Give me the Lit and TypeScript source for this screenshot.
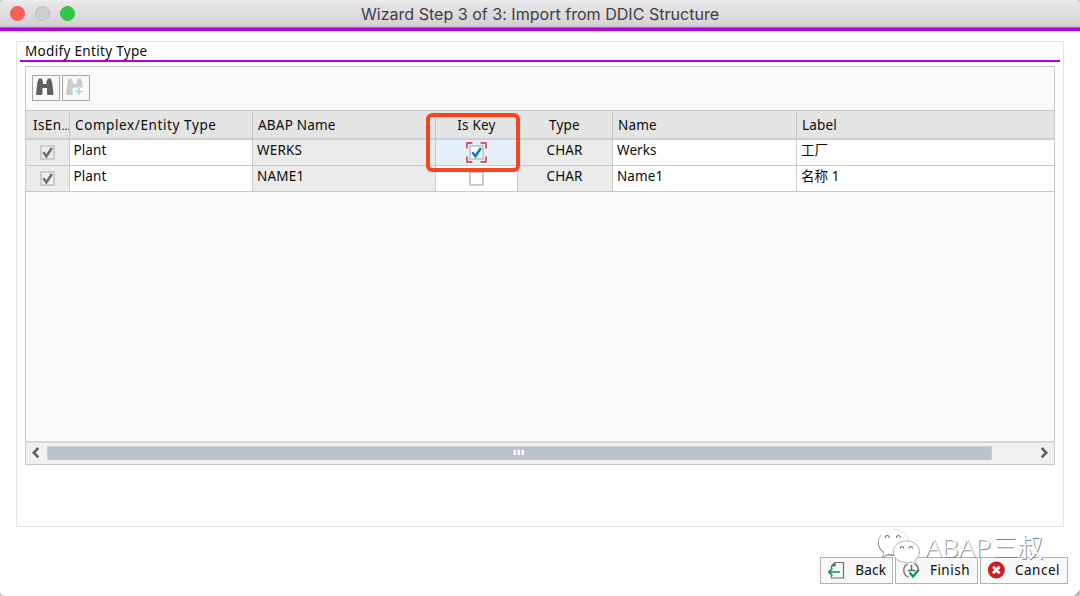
import { LitElement, html, css, svg, nothing } from "lit";
import { customElement, property } from "lit/decorators.js";

const COLUMNS = [
  { id: "isen", label: "IsEn" },
  { id: "entity", label: "Complex/Entity Type" },
  { id: "abap", label: "ABAP Name" },
  { id: "key", label: "Is Key" },
  { id: "type", label: "Type" },
  { id: "name", label: "Name" },
  { id: "label", label: "Label" },
];

const ROWS = [
  { entity: "Plant", abap: "WERKS", key: true, type: "CHAR", name: "Werks", label: "工厂" },
  { entity: "Plant", abap: "NAME1", key: false, type: "CHAR", name: "Name1", label: "名称 1" },
];

@customElement("check-mark")
class CheckMark extends LitElement {
  @property({ type: Boolean }) checked = false;
  @property({ type: Boolean }) disabled = false;
  @property({ type: Boolean }) focused = false;
  static styles = css`
    :host { display: block; width: 21px; height: 21px; }
    svg { display: block; }
  `;
  render() {
    return html`<svg width="21" height="21" viewBox="0 0 21 21" fill="none">
      <rect x="4" y="4" width="13" height="13" fill=${this.disabled ? "#ededed" : "#fff"} stroke="#cbcbcb" stroke-width="2" />
      ${this.checked
        ? svg`<path d="M6.3 10.3 L9.4 14.2 L14.9 6" stroke=${this.disabled ? "#707070" : "#0a80c4"} stroke-width="2.6" />`
        : nothing}
      ${this.focused
        ? svg`<path d="M1 6.5V1H6.5M14.5 1H20V6.5M20 14.5V20H14.5M6.5 20H1V14.5" stroke="#e0222c" stroke-width="1.4" />`
        : nothing}
    </svg>`;
  }
}

@customElement("app-root")
class AppRoot extends LitElement {
  static styles = css`
    :host { display: block; width: 1080px; height: 596px; background: #c6c6c6; overflow: hidden; }
    * { box-sizing: border-box; }
    .window {
      position: relative; height: 596px; background: #fff; border-radius: 5px; overflow: hidden;
      display: flex; flex-direction: column;
      font: 13.5px/20px "Noto Sans", "Noto Sans CJK SC", sans-serif; color: #0c0c0c; white-space: nowrap;
    }
    .title {
      height: 31px; flex: none; display: grid; grid-template-columns: 76px 1fr 76px; align-items: start;
      background: linear-gradient(#f0eff0 0, #e7e5e7 3px, #d3d1d3 26px, #b9b4ba 27px, #b100dd 28px);
      border-bottom: 3px solid #b100dd;
      font: 16.1px/28px Inter, Roboto, sans-serif; color: #404040;
    }
    .lights { display: flex; gap: 10px; padding: 6px 0 0 10px; }
    .lights i { width: 15px; height: 15px; border-radius: 50%; flex: none; }
    .red { background: #fc605b; border: 1px solid #ee5852; }
    .grey { background: #d0cfd0; border: 1px solid #bdbcbd; }
    .green { background: #34c84a; border: 1px solid #2dbb41; }
    .title span { text-align: center; letter-spacing: -0.02px; }
    .group {
      margin: 10px 16px 0; height: 486px; flex: none; border: 1px solid #e4e4e4; padding: 0 3px;
      display: flex; flex-direction: column;
    }
    .legend { height: 20px; line-height: 19px; padding-left: 5px; border-bottom: 2px solid #b100dd; }
    .legend b { font-weight: 400; letter-spacing: 0.32px; }
    .panel {
      margin: 4px 5px 0; height: 399px; border: 1px solid #c6c6c6; background: #f9f9f9;
      display: flex; flex-direction: column;
    }
    .tools { height: 43px; flex: none; display: flex; gap: 2px; padding: 8px 0 0 6px; }
    .tool { width: 28px; height: 26px; border: 1px solid #a5a5a5; background: #f9f9f9; }
    .tool svg { display: block; }
    .row { display: grid; grid-template-columns: 44px 183px 183px 82px 95px 184px 257px; height: 26px; flex: none; }
    .head { height: 30px; }
    .cell { border-right: 1px solid #c9c9c9; border-bottom: 1px solid #c9c9c9; padding: 0 0 0 4px; overflow: hidden; background: #fff; letter-spacing: 0.1px; }
    .cell:last-child { border-right: 0; }
    .head .cell {
      background: #e4e4e4; border-top: 1px solid #c9c9c9; border-bottom: 2px solid #cfcfcf;
      line-height: 28px; padding-left: 5px; letter-spacing: 0.6px;
    }
    .head .abap, .head .key, .head .type, .head .name, .head .label { letter-spacing: 0.2px; }
    .head .isen { padding-left: 7px; letter-spacing: 0.4px; }
    .isen small { font-size: 11px; letter-spacing: 0; }
    .row .cell.key { text-align: center; padding-left: 0; }
    .row .cell.type { text-align: center; padding: 0 1px 0 0; }
    .body .isen, .body .abap, .body .type { background: #ebebeb; }
    .body .entity { padding-left: 3.5px; }
    .body .abap { letter-spacing: 0.2px; }
    .body .isen { padding-left: 3.5px; }
    .body .isen check-mark { margin: 2px 0 0 7px; }
    .body .key check-mark { margin: 2px 0 0 30px; }
    .body .selected { background: #e5f1fa; }
    .space { flex: 1; }
    .scroll {
      height: 23px; flex: none; border-top: 2px solid #d5d5d5; background: #f1f1f1;
      display: grid; grid-template-columns: 21px 945px 1fr 21px; align-items: start;
    }
    .thumb { margin-top: 3px; height: 14px; background: #b8c3cd; display: flex; gap: 1px; justify-content: center; padding: 3px 2px 0 0; border: 1px solid #c6d0d8; border-width: 1px 1px 0 1px; }
    .thumb i { width: 3px; height: 5px; background: #fff; border-left: 1px solid #dfe5ea; }
    .scroll svg { display: block; margin-top: 3px; }
    .footer { display: flex; gap: 2px; justify-content: flex-end; padding: 30px 12px 0 0; }
    .btn {
      height: 27px; border: 1px solid #b2b2b2; background: #f7f7f7; display: flex; align-items: center;
      justify-content: space-between; padding: 0 6px 1px 6px;
    }
    .back { width: 73px; letter-spacing: 0.15px; }
    .finish { width: 83px; letter-spacing: 0.5px; padding-right: 7px; }
    .cancel { width: 88px; letter-spacing: 0.5px; padding-right: 7px; }
    .callout { position: absolute; left: 426px; top: 113px; width: 94px; height: 59px; border: 4px solid #fb4420; border-radius: 6px; }
    .watermark { position: absolute; left: 874px; top: 524px; pointer-events: none; }
    .watermark text { font: 300 25.6px "Noto Sans", "Noto Sans CJK SC", sans-serif; }
    .watermark .latin { font-family: "Open Sans", "Noto Sans", sans-serif; }
    .grip { position: absolute; right: 0; bottom: 0; }
  `;

  binoculars(add: boolean) {
    const color = add ? "#cbcbcb" : "#606060";
    return html`<svg width="26" height="24" viewBox="0 0 26 24">
      <path fill=${color} d="M5.5 2.5H9V4L10 5V8H13.5V5L14.5 4V2.5H18V4L19 5.5L20.3 16V18Q20.3 19 19 19H15Q14 19 14 18V12H9.5V18Q9.5 19 8.5 19H4.5Q3.2 19 3.2 18V16L4.5 5.5L5.5 4Z" />
      ${add
        ? svg`<path d="M11 11.5h11v10H11z" fill="#f9f9f9" /><path d="M16 12V19M12.5 15.5H19.5" stroke="#9fd4ee" stroke-width="1.3" />`
        : nothing}
    </svg>`;
  }

  render() {
    return html`<div class="window">
      <div class="title">
        <div class="lights"><i class="red"></i><i class="grey"></i><i class="green"></i></div>
        <span>Wizard Step 3 of 3: Import from DDIC Structure</span>
      </div>
      <div class="group">
        <div class="legend"><b>Modify Entity Type</b></div>
        <div class="panel">
          <div class="tools">
            <div class="tool">${this.binoculars(false)}</div>
            <div class="tool">${this.binoculars(true)}</div>
          </div>
          <div class="row head">
            ${COLUMNS.map((c) => html`<div class="cell ${c.id}">${c.label}${c.id === "isen" ? html`<small>...</small>` : nothing}</div>`)}
          </div>
          ${ROWS.map((r) => html`<div class="row body">
            <div class="cell isen"><check-mark checked disabled></check-mark></div>
            <div class="cell entity">${r.entity}</div>
            <div class="cell abap">${r.abap}</div>
            <div class="cell key ${r.key ? "selected" : ""}"><check-mark ?checked=${r.key} ?focused=${r.key}></check-mark></div>
            <div class="cell type">${r.type}</div>
            <div class="cell name">${r.name}</div>
            <div class="cell label">${r.label}</div>
          </div>`)}
          <div class="space"></div>
          <div class="scroll">
            <svg width="21" height="14" viewBox="0 0 21 14"><path d="M12.3 2L7.8 6.7L12.3 11.4" fill="none" stroke="#606060" stroke-width="2.6" /></svg>
            <div class="thumb"><i></i><i></i><i></i></div>
            <span></span>
            <svg width="21" height="14" viewBox="0 0 21 14"><path d="M8.7 2L13.2 6.7L8.7 11.4" fill="none" stroke="#606060" stroke-width="2.6" /></svg>
          </div>
        </div>
      </div>
      <div class="footer">
        <div class="btn back">
          <svg width="19" height="19" viewBox="0 0 19 19" fill="none"><path d="M4.5 8V5L8 1.5H16.5V17H4.5V14" stroke="#707070" stroke-width="1.2" /><path d="M4 5.5L8.5 1V5.5Z" fill="#606060" /><path d="M13 11H1.8M5.5 7.5L1.8 11L5.5 14.5" stroke="#0b9547" stroke-width="1.6" /></svg>Back
        </div>
        <div class="btn finish">
          <svg width="19" height="19" viewBox="0 0 19 19" fill="none"><path d="M5.5 2.8A7.3 7.3 0 0 0 6.5 16M12 2.5A7.3 7.3 0 0 1 16.3 8" stroke="#707070" stroke-width="1.4" /><path d="M9.5 4V10M6 9.5H13" stroke="#606060" stroke-width="1.4" /><path d="M7.5 11.5L11 15.5L16.8 8.5" stroke="#0b9547" stroke-width="2.2" /></svg>Finish
        </div>
        <div class="btn cancel">
          <svg width="19" height="19" viewBox="0 0 19 19"><circle cx="9.3" cy="9" r="8.5" fill="#d11a20" /><path d="M6 5.7L12.6 12.3M12.6 5.7L6 12.3" stroke="#fff" stroke-width="2.8" /></svg>Cancel
        </div>
      </div>
      <div class="callout"></div>
      <svg class="watermark" width="180" height="44" viewBox="0 0 180 44">
        <path d="M19 6C10 6 4 11.5 4 18.5C4 22.5 6 26 9.5 28.3L8 33.5L14 30.8Q16 31.5 19 31.5C28 31.5 34 25.5 34 18.5S28 6 19 6Z" fill="#8c8c8c" transform="translate(-0.1 0.4)" />
        <path d="M19.3 5.2C10.5 5.2 4.8 11.5 4.8 18.2C4.8 22.2 6.8 25.8 10.3 28L9 32.5L14 29.8Q16 30.5 19.3 30.5C28.5 30.5 34.6 25.5 34.6 18.2S28.3 5.2 19.3 5.2Z" fill="#fff" />
        <path d="M19.5 5.5C27 5.5 34 10 34.3 17" fill="none" stroke="#d4d4d4" stroke-width="0.8" />
        <path d="M32.5 17C25 17 19.3 21.7 19.3 27.7S25 38.6 32.5 38.6Q35 38.6 37.3 37.8L42 40.4L40.8 36.2C44 34 45.6 31 45.6 27.7C45.6 21.7 40 17 32.5 17Z" fill="#fff" stroke="#a0a0a0" stroke-width="0.8" />
        <g fill="none" stroke="#777" stroke-width="1.1"><path d="M11.4 14a1.9 1.9 0 1 1 3.6 0M22.6 14a1.9 1.9 0 1 1 3.6 0M26.5 24.6a1.6 1.6 0 1 1 3 0M35.3 24.6a1.6 1.6 0 1 1 3 0" /></g>
        <g fill="#858585" transform="translate(1 1)"><text class="latin" x="51" y="33" textLength="66" lengthAdjust="spacingAndGlyphs">ABAP</text><text x="118" y="33" textLength="51">三叔</text></g>
        <g fill="#fff"><text class="latin" x="51" y="33" textLength="66" lengthAdjust="spacingAndGlyphs">ABAP</text><text x="118" y="33" textLength="51">三叔</text></g>
      </svg>
      <svg class="grip" width="6" height="6" viewBox="0 0 6 6"><path d="M6 0V6H0Z" fill="#a9a9a9" /></svg>
    </div>`;
  }
}
